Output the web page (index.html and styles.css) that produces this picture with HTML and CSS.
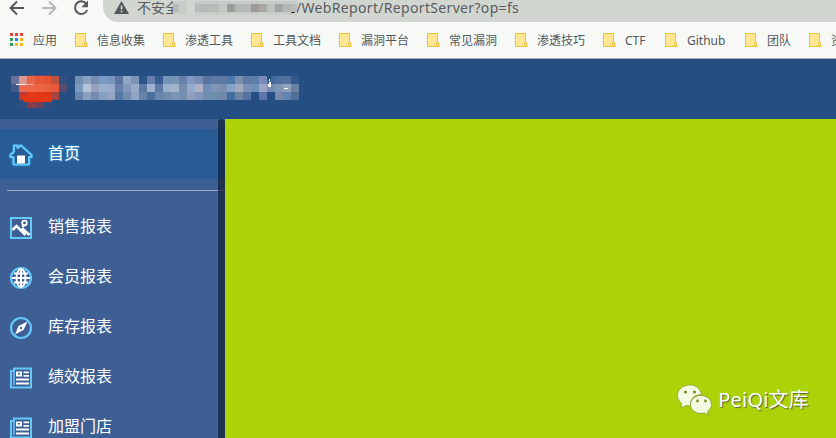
FILE: index.html
```
<!DOCTYPE html>
<html lang="zh-CN">
<head>
<meta charset="utf-8">
<title>ReportServer</title>
<link rel="stylesheet" href="styles.css">
</head>
<body>
<svg class="defs" width="0" height="0" aria-hidden="true">
  <symbol id="folder" viewBox="0 0 13 15"><path d="M.5 .5h10v9h1.300v4H.5z" fill="#ffe694" stroke="#e9c343"/><path d="M9.500 13.500v-3l1-1.200 1.200 1.200v3z" fill="#ffe694" stroke="#e9c343"/></symbol>
  <symbol id="news" viewBox="0 0 24 24"><path d="M5 2.500h17v19H2V5h3z" fill="#3d5f93" stroke="#64c8fb" stroke-width="2"/><path d="M5 4v15" stroke="#64c8fb" stroke-width="1.500"/><path d="M7 5.500h6v5H7zM14.500 5.500H20v1.700h-5.500zM14.500 9H20v1.700h-5.500zM7 12.500h13v2H7zM7 16.500h13v2H7z" fill="#fff"/><path d="M9 7h2v1.500H9z" fill="#3d5f93"/></symbol>
</svg>
<div class="toolbar">
  <svg class="nav" width="103" height="22" fill="none" stroke-width="2">
    <path d="M24 8H11M17 1.500L10.500 8l6.500 6.500" stroke="#56595b"/>
    <path d="M42 8h13M49 1.500L55.500 8 49 14.500" stroke="#b5b8b8"/>
    <path d="M86.500 4A6.300 6.300 0 1 0 87.200 10" stroke="#56595b"/><path d="M88 .5v6.700h-6.700z" fill="#56595b"/>
  </svg>
  <div class="address">
    <svg class="warn" width="15" height="14"><path d="M7.500 0L15 13H0z" fill="#55585a"/><path d="M6.700 4.500h1.700v4H6.700zM6.700 9.700h1.700v1.600H6.700z" fill="#d1d6d1"/></svg>
    <span class="unsafe">不安全</span>
    <svg class="hostmask" id="hostmask" width="124" height="20" shape-rendering="crispEdges"></svg>
    <span class="url">/WebReport/ReportServer?op=fs</span>
  </div>
</div>
<nav class="bookmarks">
  <svg class="apps" width="14" height="14" shape-rendering="crispEdges">
    <path d="M0 0h3v3H0zM5 0h3v3H5zM10 0h3v3h-3z" fill="#ea4335"/><path d="M0 5h3v3H0zM0 10h3v3H0z" fill="#34a058"/><path d="M5 5h3v3H5z" fill="#2986f5"/><path d="M10 5h3v3h-3zM5 10h3v3H5zM10 10h3v3h-3z" fill="#f9b914"/>
  </svg>
  <span class="apps-label">应用</span>
  <span class="bm"><svg><use href="#folder"/></svg>信息收集</span>
  <span class="bm"><svg><use href="#folder"/></svg>渗透工具</span>
  <span class="bm"><svg><use href="#folder"/></svg>工具文档</span>
  <span class="bm"><svg><use href="#folder"/></svg>漏洞平台</span>
  <span class="bm"><svg><use href="#folder"/></svg>常见漏洞</span>
  <span class="bm"><svg><use href="#folder"/></svg>渗透技巧</span>
  <span class="bm ctf"><svg><use href="#folder"/></svg>CTF</span>
  <span class="bm github"><svg><use href="#folder"/></svg>Github</span>
  <span class="bm team"><svg><use href="#folder"/></svg>团队</span>
  <span class="bm last"><svg><use href="#folder"/></svg>资</span>
</nav>
<header class="header">
  <svg id="brand" width="310" height="60" shape-rendering="crispEdges"></svg>
</header>
<main class="main">
  <aside class="sidebar">
    <div class="item active">
      <svg viewBox="0 0 24 24"><path d="M1.500 12L5 8.500V2.500h3.500V5L12 2.500 22.500 12v2H20v7.500H4.500V14h-3z" fill="#295b94" stroke="#64c8fb" stroke-width="2.200" stroke-linejoin="round"/><path d="M8 12.500h8v8H8z" fill="#fff"/></svg>首页
    </div>
    <hr>
    <div class="item">
      <svg viewBox="0 0 24 24"><path d="M2 2h20v20H2z" fill="none" stroke="#64c8fb" stroke-width="2"/><path d="M3.500 14L7.500 10l9 9M12 14.500l2-1.500 6.500 6M13.500 11l2-2.500" fill="none" stroke="#fff" stroke-width="2.500"/><circle cx="15.500" cy="7" r="2.300" fill="none" stroke="#fff" stroke-width="1.700"/></svg>销售报表
    </div>
    <div class="item">
      <svg viewBox="0 0 24 24"><circle cx="12" cy="12" r="10" fill="#3d5f93" stroke="#64c8fb" stroke-width="2.200"/><g fill="none" stroke="#fff" stroke-width="2"><ellipse cx="12" cy="12" rx="4.500" ry="9"/><path d="M12 3v18M3 12h18M5 7.500h14M5 16.500h14"/></g></svg>会员报表
    </div>
    <div class="item">
      <svg viewBox="0 0 24 24"><circle cx="12" cy="12" r="10" fill="none" stroke="#64c8fb" stroke-width="2.200"/><path d="M18.500 5.500L14.500 14l-8.500 4.500L9.500 10z" fill="#fff"/><circle cx="12" cy="12" r="1.200" fill="#3d5f93"/></svg>库存报表
    </div>
    <div class="item"><svg><use href="#news"/></svg>绩效报表</div>
    <div class="item"><svg><use href="#news"/></svg>加盟门店</div>
    <div class="scrollbar"></div>
  </aside>
  <section class="content">
    <div class="watermark">
      <svg width="36" height="32">
        <path d="M13 1C6 1 .5 5.500.5 11.500c0 3.500 2 6.200 4.500 8L4 24l5-2.500 4.500.6C13 14 18 10.500 24.500 10.500 23.500 5 19 1 13 1z" fill="#f5fae2" stroke="#76902a" stroke-width=".6"/>
        <path d="M24 11.500c-6 0-10.500 4-10.500 9 0 5.200 4.700 9 10.500 9l3.500-.6L31.500 31l-1-3.500c2.400-1.600 4-4.200 4-7 0-5-4.500-9-10.500-9z" fill="#f5fae2" stroke="#76902a" stroke-width=".7"/>
        <g fill="#76902a"><circle cx="8.500" cy="8" r="1.600"/><circle cx="17.500" cy="8" r="1.600"/><circle cx="20.500" cy="17" r="1.400"/><circle cx="28.500" cy="17" r="1.400"/></g>
      </svg>
      <span>PeiQi文库</span>
    </div>
  </section>
</main>
<script src="mosaic.js"></script>
</body>
</html>
```
FILE: styles.css
```
* { box-sizing: border-box; }
body {
  margin: 0;
  width: 836px;
  height: 438px;
  overflow: hidden;
  font-family: "Noto Sans", "Noto Sans CJK SC", sans-serif;
  background: #f6f9f6;
}
.defs { position: absolute; }
svg { display: block; flex: none; }
.toolbar { display: flex; height: 22px; }
.address {
  display: flex;
  flex: 1;
  height: 22px;
  padding-left: 11px;
  background: #d1d6d1;
  border-bottom-left-radius: 14px 16px;
  color: #585b5d;
  font-size: 14px;
  line-height: 16px;
  white-space: nowrap;
}
.warn { margin-top: 1px; }
.unsafe { flex: none; width: 44px; margin-left: 8px; }
.hostmask { margin-left: -8px; position: relative; }
.url { margin-left: -1px; letter-spacing: .33px; }
.bookmarks {
  display: flex;
  align-items: center;
  height: 37px;
  padding: 1px 0 0 10px;
  overflow: hidden;
  border-bottom: 1px solid #a9acab;
  color: #55585a;
  font-size: 12px;
  line-height: 18px;
  white-space: nowrap;
}
.apps { margin-top: -2px; }
.apps-label { flex: none; width: 42px; margin-left: 9px; }
.bm { display: flex; flex: none; align-items: center; width: 88px; }
.bm svg { width: 13px; height: 15px; margin: -1px 9px 0 0; }
.ctf { width: 62px; }
.github { width: 80px; }
.team { width: 64px; }
.last { width: 27px; overflow: hidden; }
.header { height: 60px; background: #254e83; }
.main { display: flex; height: 319px; }
.sidebar { position: relative; width: 225px; padding-top: 10px; background: #3d5f93; }
.item {
  display: flex;
  align-items: center;
  height: 50px;
  padding: 0 0 2px 9px;
  color: #fff;
  font-size: 16px;
  line-height: 24px;
}
.item svg { width: 24px; height: 24px; margin: 3px 15px 0 0; }
.active { background: #295b94; text-shadow: 0 0 3px #3db3f4; }
.active svg { filter: drop-shadow(0 0 1px #2a8fda); }
.sidebar hr { height: 1px; margin: 11px 0 11px 7px; border: 0; background: #9caac0; }
.scrollbar {
  position: absolute;
  top: 0;
  right: 0;
  width: 7px;
  height: 319px;
  border-radius: 4px 4px 0 0;
  background: rgba(12, 24, 46, .65);
}
.content {
  display: flex;
  flex: 1;
  align-items: flex-end;
  justify-content: flex-end;
  padding: 0 27px 22px 0;
  background: #abd307;
}
.watermark {
  display: flex;
  align-items: center;
  gap: 5px;
  color: #fff;
  font-size: 20px;
  line-height: 32px;
  letter-spacing: .2px;
  text-shadow: 1px 1px 1px #53613d;
}
```
FILE: mosaic.js
```
const NS = "http://www.w3.org/2000/svg";

function block(svg, x, y, w, h, fill) {
  const r = document.createElementNS(NS, "rect");
  Object.entries({ x, y, width: w, height: h, fill }).forEach(([k, v]) => r.setAttribute(k, v));
  svg.appendChild(r);
}

function grid(svg, x, y, size, rows) {
  rows.forEach((row, j) => row.split(" ").forEach((c, i) => {
    if (c !== "-") block(svg, x + i * size, y + j * size, size, size, "#" + c);
  }));
}

const brand = document.getElementById("brand");
block(brand, 27, 16, 24, 1, "#5a496b");
grid(brand, 11, 17, 8, [
  "66709a dc9790 e9664b e65637 e55232 b9533f 324f80",
  "435b88 eb694c ed6849 eb6446 eb6041 e9593a 584b71",
  "- b53b34 e33716 e13614 dc3616 a54440 -",
  "- 304f7e 873e4b 713f57 304f7e - -"
]);
grid(brand, 75, 17, 8, [
  "718eb5 8ca0bf 758bb0 7c99c3 7894bd 5b759f 92a9c5 7f93b6 2a5589 647bac 385b92 7094b8 7894b7 687fa9 8097c1 788cb4 5b75a3 5f78a4 5f79a4 4c79aa 7b8eab 607aa6 5e7daa 7a8aba 416899 4d719f 52719c 34588c",
  "7d9ac1 b7c3d8 94a3c1 98b0ce 97aac9 6580ac 8399b7 99abc8 5d79a2 9eb1ce 6079a4 9cb1cd a3b3ca 788cae 94aacc afb1c5 708fb8 8095b5 798fb4 85a3c5 a0a9bc 7990b7 6e8db7 9ba4c6 748cb2 8197b8 90a1bb 6881a4",
  "6984ad 8ba0c0 768bad 859fbf 94a4c2 5778a5 748cad 92a5c2 6a82a8 4c6e9b 6a86ae 718bad 7994b4 748eb0 919fbd 8496bd 7090ad 6d8dad 7387ab 416f9f 6c83a4 5573a2 - 5d76aa - 7689ad 5e84af 526f98"
]);
block(brand, 16, 25, 9, 1, "#fff");
block(brand, 25, 25, 8, 1, "#f4ae9b");
block(brand, 267, 17, 4, 4, "#254e83");
block(brand, 269, 20, 1, 2, "#fff");
block(brand, 269, 23, 2, 2, "#fff");
block(brand, 268, 25, 3, 3, "#fff");
block(brand, 284, 29, 4, 1, "#fff");
const tip = document.createElementNS(NS, "path");
tip.setAttribute("d", "M20 36h32v7H24z");
tip.setAttribute("fill", "#e33715");
brand.appendChild(tip);

const host = document.getElementById("hostmask");
const hostColors = "b6bab8 c9cdc9 - b9bdb9 b6bab7 b9bdb9 c4c8c4 999d9b b4b8b4 b6bab6 9c9b97 a9a7a0 bdc4bf a1a5a5 b4b8b4 b9bcb9".split(" ");
hostColors.forEach((c, i) => {
  if (c === "-") return;
  const x = i * 8 - 2;
  block(host, x, 4, 8, 8, "#" + c);
  block(host, x, 1, 8, 3, "#c8ccc8");
  block(host, x, 12, 8, 3, "#c9cec9");
});
block(host, 118, 12, 4, 1, "#333");
```
